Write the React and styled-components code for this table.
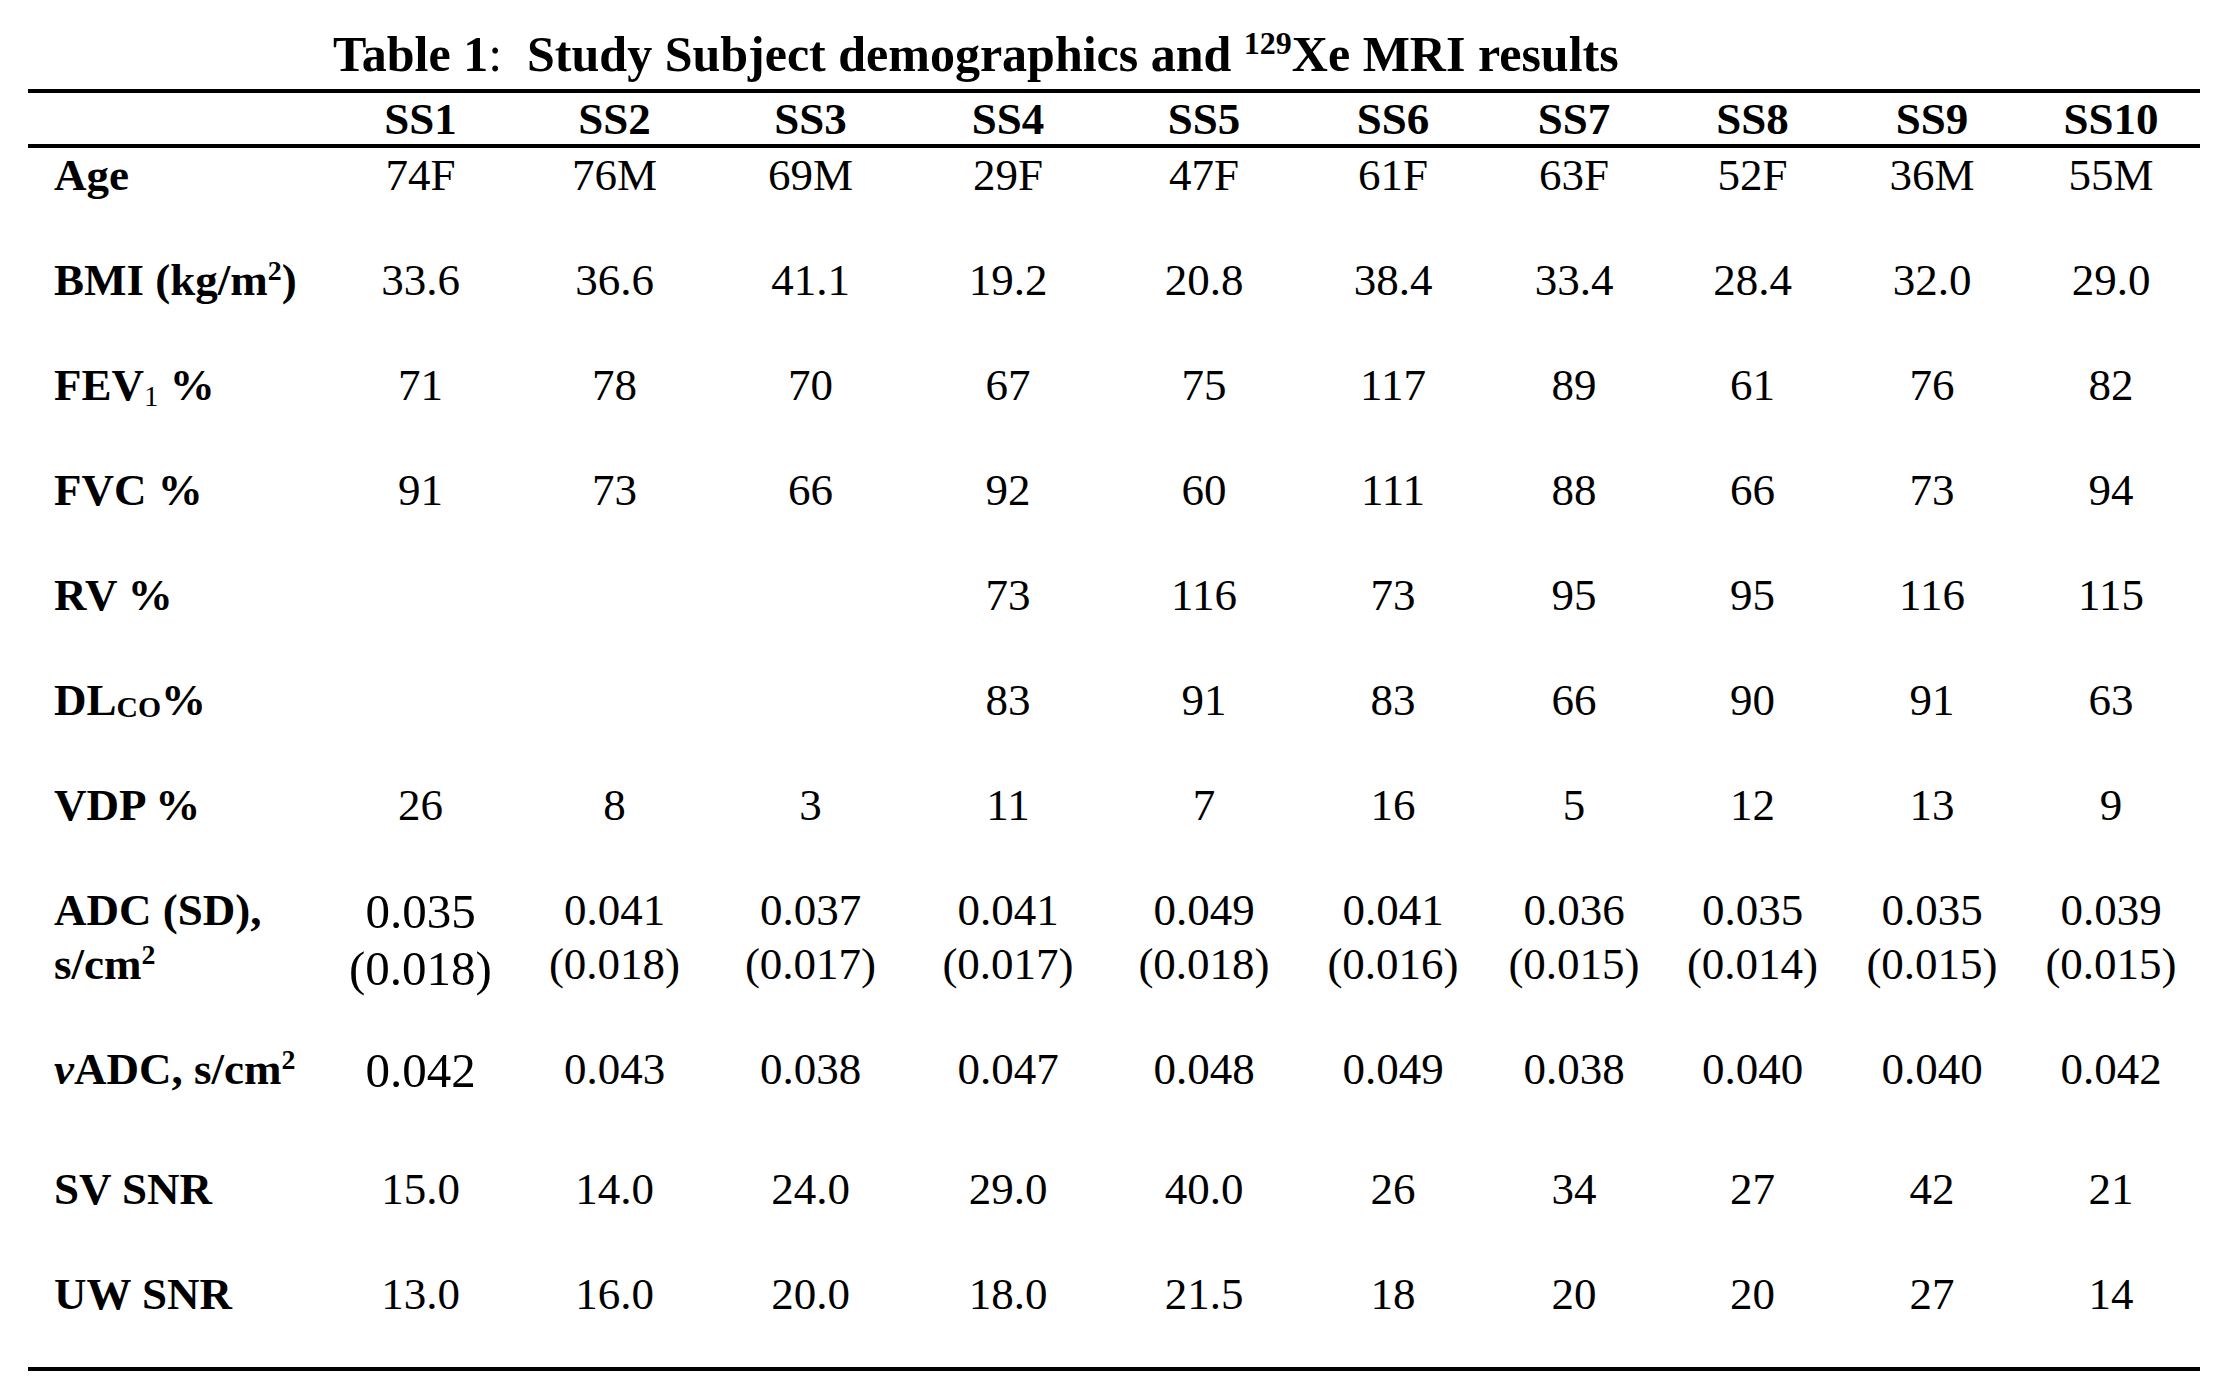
import styled, { createGlobalStyle } from "styled-components";

const GlobalStyle = createGlobalStyle`
  body {
    margin: 0;
    background: #ffffff;
  }
`;

const COLUMNS = "296px 193px 195px 197px 198px 194px 184px 178px 179px 180px 178px";

const subjects = ["SS1", "SS2", "SS3", "SS4", "SS5", "SS6", "SS7", "SS8", "SS9", "SS10"];

// label is rendered by the row itself, values go one per subject
const rows = [
  { key: "age", values: ["74F", "76M", "69M", "29F", "47F", "61F", "63F", "52F", "36M", "55M"] },
  { key: "bmi", values: ["33.6", "36.6", "41.1", "19.2", "20.8", "38.4", "33.4", "28.4", "32.0", "29.0"] },
  { key: "fev", values: ["71", "78", "70", "67", "75", "117", "89", "61", "76", "82"] },
  { key: "fvc", values: ["91", "73", "66", "92", "60", "111", "88", "66", "73", "94"] },
  { key: "rv", values: ["", "", "", "73", "116", "73", "95", "95", "116", "115"] },
  { key: "dlco", values: ["", "", "", "83", "91", "83", "66", "90", "91", "63"] },
  { key: "vdp", values: ["26", "8", "3", "11", "7", "16", "5", "12", "13", "9"] },
  {
    key: "adc",
    gap: 45,
    values: [
      ["0.035", "(0.018)"],
      ["0.041", "(0.018)"],
      ["0.037", "(0.017)"],
      ["0.041", "(0.017)"],
      ["0.049", "(0.018)"],
      ["0.041", "(0.016)"],
      ["0.036", "(0.015)"],
      ["0.035", "(0.014)"],
      ["0.035", "(0.015)"],
      ["0.039", "(0.015)"],
    ],
  },
  { key: "vadc", gap: 63, values: ["0.042", "0.043", "0.038", "0.047", "0.048", "0.049", "0.038", "0.040", "0.040", "0.042"] },
  { key: "sv", values: ["15.0", "14.0", "24.0", "29.0", "40.0", "26", "34", "27", "42", "21"] },
  { key: "uw", gap: 46, values: ["13.0", "16.0", "20.0", "18.0", "21.5", "18", "20", "20", "27", "14"] },
];

function RowLabel({ name }) {
  switch (name) {
    case "age":
      return <>Age</>;
    case "bmi":
      return (
        <>
          BMI (kg/m<Sup>2</Sup>)
        </>
      );
    case "fev":
      return (
        <>
          FEV<Sub>1</Sub> %
        </>
      );
    case "fvc":
      return <>FVC %</>;
    case "rv":
      return <>RV %</>;
    case "dlco":
      return (
        <>
          DL<Small>CO</Small>%
        </>
      );
    case "vdp":
      return <>VDP %</>;
    case "adc":
      return (
        <>
          ADC (SD),
          <br />
          s/cm<Sup>2</Sup>
        </>
      );
    case "vadc":
      return (
        <>
          <i>v</i>ADC, s/cm<Sup>2</Sup>
        </>
      );
    case "sv":
      return <>SV SNR</>;
    case "uw":
      return <>UW SNR</>;
    default:
      return null;
  }
}

function App() {
  return (
    <>
      <GlobalStyle />
      <Page>
        <Title>
          Table 1<Colon>:</Colon>
          {"  "}Study Subject demographics and <TitleSup>129</TitleSup>Xe MRI results
        </Title>
        <Table>
          <HeadRow>
            <Label />
            {subjects.map((s) => (
              <HeadCell key={s}>{s}</HeadCell>
            ))}
          </HeadRow>
          {rows.map((row) => (
            <BodyRow key={row.key} $gap={row.gap ?? 51}>
              <Label>
                <RowLabel name={row.key} />
              </Label>
              {row.values.map((v, i) => (
                <Cell key={i} $big={i === 0 && (row.key === "adc" || row.key === "vadc")}>
                  {Array.isArray(v) ? (
                    <>
                      {v[0]}
                      <br />
                      {v[1]}
                    </>
                  ) : (
                    v
                  )}
                </Cell>
              ))}
            </BodyRow>
          ))}
        </Table>
      </Page>
    </>
  );
}

export default App;

const Page = styled.div`
  box-sizing: border-box;
  width: 2230px;
  min-height: 1378px;
  padding: 26px 0 0 28px;
  background: #ffffff;
  color: #000000;
  font-family: "Liberation Serif", "Times New Roman", serif;
`;

const Title = styled.h1`
  margin: 0 0 7px;
  padding-left: 305px;
  font-size: 50px;
  line-height: 56px;
  font-weight: 700;
  white-space: pre;
`;

const Colon = styled.span`
  font-weight: 400;
`;

const TitleSup = styled.sup`
  font-size: 0.64em;
  line-height: 0;
  vertical-align: 0.52em;
`;

const Table = styled.div`
  width: 2172px;
  border-top: 4px solid #000000;
  border-bottom: 4px solid #000000;
`;

const rowGrid = `
  display: grid;
  grid-template-columns: ${COLUMNS};
  align-items: start;
  font-size: 45px;
  line-height: 54px;
`;

const HeadRow = styled.div`
  ${rowGrid}
  padding-top: 2px;
  line-height: 49px;
  border-bottom: 4px solid #000000;
  font-weight: 700;
`;

const BodyRow = styled.div`
  ${rowGrid}
  padding-bottom: ${(p) => p.$gap}px;
`;

const Label = styled.div`
  padding-left: 26px;
  font-weight: 700;
  white-space: nowrap;
  text-align: left;
`;

const HeadCell = styled.div`
  text-align: center;
`;

const Cell = styled.div`
  text-align: center;
  white-space: nowrap;
  font-size: ${(p) => (p.$big ? "49px" : "45px")};
  line-height: ${(p) => (p.$big ? "57px" : "54px")};
`;

const Sup = styled.sup`
  font-size: 0.62em;
  line-height: 0;
  vertical-align: 0.55em;
`;

const Sub = styled.sub`
  font-size: 0.64em;
  font-weight: 400;
  line-height: 0;
  vertical-align: -0.22em;
`;

const Small = styled.span`
  font-size: 0.66em;
  line-height: 0;
  vertical-align: -0.08em;
`;
